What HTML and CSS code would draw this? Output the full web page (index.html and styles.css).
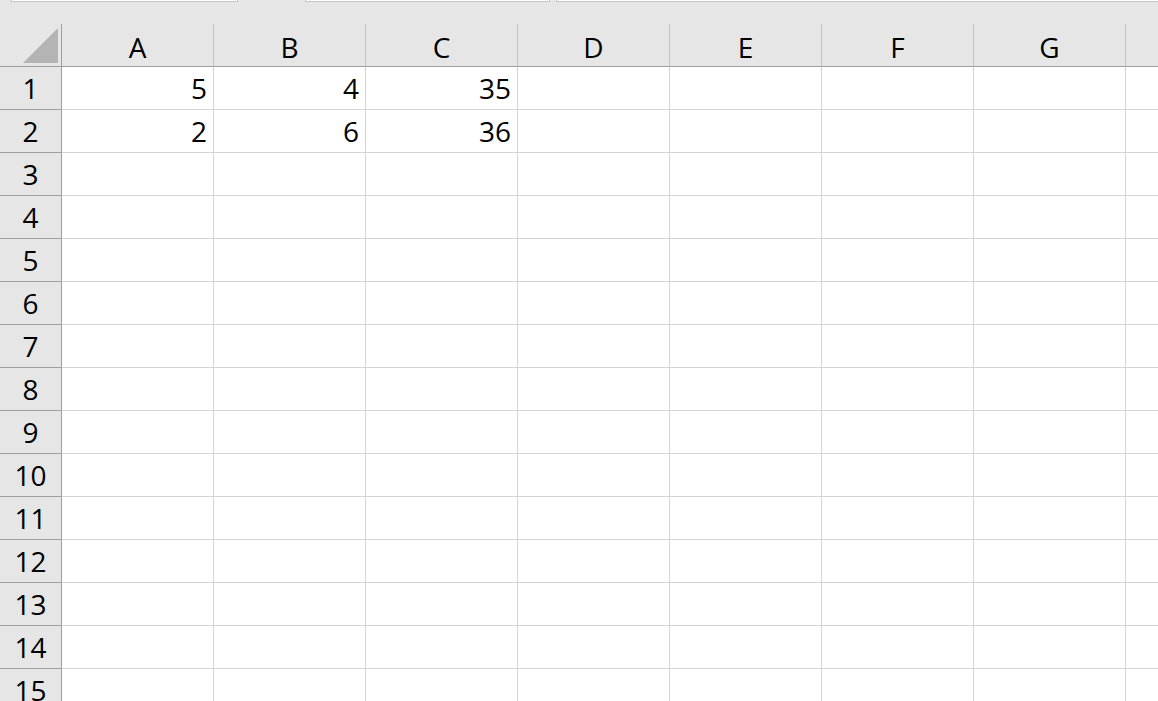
FILE: index.html
```html
<!DOCTYPE html>
<html lang="en">
<head>
    <meta charset="UTF-8">
    <meta name="viewport" content="width=device-width, initial-scale=1.0">
    <title>Sheet1 - Excel</title>
    <link rel="stylesheet" href="styles.css">
</head>
<body>
    <div class="sheet">
        <div class="toolbar-edge">
            <div class="edge-box name-box"></div>
            <div class="edge-box fx-box"></div>
            <div class="edge-box formula-box"></div>
        </div>

        <div class="grid">
            <div class="row head">
                <div class="cell corner">
                    <svg width="36" height="36" viewBox="0 0 36 36"><polygon points="0,35 35,35 35,0" fill="#b4b4b4"/></svg>
                </div>
                <div class="cell col">A</div>
                <div class="cell col">B</div>
                <div class="cell col">C</div>
                <div class="cell col">D</div>
                <div class="cell col">E</div>
                <div class="cell col">F</div>
                <div class="cell col">G</div>
                <div class="cell col"></div>
            </div>
            <div class="row">
                <div class="cell num">1</div>
                <div class="cell">5</div><div class="cell">4</div><div class="cell">35</div>
                <div class="cell"></div><div class="cell"></div><div class="cell"></div><div class="cell"></div><div class="cell"></div>
            </div>
            <div class="row">
                <div class="cell num">2</div>
                <div class="cell">2</div><div class="cell">6</div><div class="cell">36</div>
                <div class="cell"></div><div class="cell"></div><div class="cell"></div><div class="cell"></div><div class="cell"></div>
            </div>
            <div class="row">
                <div class="cell num">3</div>
                <div class="cell"></div><div class="cell"></div><div class="cell"></div><div class="cell"></div><div class="cell"></div><div class="cell"></div><div class="cell"></div><div class="cell"></div>
            </div>
            <div class="row">
                <div class="cell num">4</div>
                <div class="cell"></div><div class="cell"></div><div class="cell"></div><div class="cell"></div><div class="cell"></div><div class="cell"></div><div class="cell"></div><div class="cell"></div>
            </div>
            <div class="row">
                <div class="cell num">5</div>
                <div class="cell"></div><div class="cell"></div><div class="cell"></div><div class="cell"></div><div class="cell"></div><div class="cell"></div><div class="cell"></div><div class="cell"></div>
            </div>
            <div class="row">
                <div class="cell num">6</div>
                <div class="cell"></div><div class="cell"></div><div class="cell"></div><div class="cell"></div><div class="cell"></div><div class="cell"></div><div class="cell"></div><div class="cell"></div>
            </div>
            <div class="row">
                <div class="cell num">7</div>
                <div class="cell"></div><div class="cell"></div><div class="cell"></div><div class="cell"></div><div class="cell"></div><div class="cell"></div><div class="cell"></div><div class="cell"></div>
            </div>
            <div class="row">
                <div class="cell num">8</div>
                <div class="cell"></div><div class="cell"></div><div class="cell"></div><div class="cell"></div><div class="cell"></div><div class="cell"></div><div class="cell"></div><div class="cell"></div>
            </div>
            <div class="row">
                <div class="cell num">9</div>
                <div class="cell"></div><div class="cell"></div><div class="cell"></div><div class="cell"></div><div class="cell"></div><div class="cell"></div><div class="cell"></div><div class="cell"></div>
            </div>
            <div class="row">
                <div class="cell num">10</div>
                <div class="cell"></div><div class="cell"></div><div class="cell"></div><div class="cell"></div><div class="cell"></div><div class="cell"></div><div class="cell"></div><div class="cell"></div>
            </div>
            <div class="row">
                <div class="cell num">11</div>
                <div class="cell"></div><div class="cell"></div><div class="cell"></div><div class="cell"></div><div class="cell"></div><div class="cell"></div><div class="cell"></div><div class="cell"></div>
            </div>
            <div class="row">
                <div class="cell num">12</div>
                <div class="cell"></div><div class="cell"></div><div class="cell"></div><div class="cell"></div><div class="cell"></div><div class="cell"></div><div class="cell"></div><div class="cell"></div>
            </div>
            <div class="row">
                <div class="cell num">13</div>
                <div class="cell"></div><div class="cell"></div><div class="cell"></div><div class="cell"></div><div class="cell"></div><div class="cell"></div><div class="cell"></div><div class="cell"></div>
            </div>
            <div class="row">
                <div class="cell num">14</div>
                <div class="cell"></div><div class="cell"></div><div class="cell"></div><div class="cell"></div><div class="cell"></div><div class="cell"></div><div class="cell"></div><div class="cell"></div>
            </div>
            <div class="row">
                <div class="cell num">15</div>
                <div class="cell"></div><div class="cell"></div><div class="cell"></div><div class="cell"></div><div class="cell"></div><div class="cell"></div><div class="cell"></div><div class="cell"></div>
            </div>
        </div>
    </div>
</body>
</html>
```

FILE: styles.css
```css
body, html {
    margin: 0;
    padding: 0;
    width: 1158px;
    height: 701px;
    overflow: hidden;
    background-color: #e6e6e6;
    font-family: "Open Sans", "Noto Sans", Arial, sans-serif;
    color: #000;
}

.sheet {
    width: 1158px;
    height: 701px;
    overflow: hidden;
}

.toolbar-edge {
    display: flex;
    height: 24px;
    padding-left: 11px;
}

.edge-box {
    height: 1px;
    background-color: #fff;
    border: 1px solid #c6c6c6;
    border-top: none;
    box-sizing: content-box;
}

.name-box {
    width: 225px;
}

.fx-box {
    width: 243px;
    margin-left: 67px;
}

.formula-box {
    flex: 1;
    margin-left: 6px;
    border-right: none;
}

.grid {
    width: 1278px;
    background-color: #fff;
}

.row {
    display: grid;
    grid-template-columns: 62px repeat(8, 152px);
    height: 43px;
}

.cell {
    box-sizing: border-box;
    height: 43px;
    border-right: 1px solid #d4d4d4;
    border-bottom: 1px solid #d4d4d4;
    display: flex;
    align-items: center;
    justify-content: flex-end;
    padding-right: 6px;
    font-size: 28px;
    line-height: 1;
}

.row.head {
    background-color: #e6e6e6;
}

.row.head .cell {
    border-bottom: 1px solid #9f9f9f;
    border-right-color: #c4c4c4;
    justify-content: center;
    padding: 3px 0 0 0;
}

.row.head .corner {
    border-right-color: #9f9f9f;
    align-items: flex-start;
    justify-content: flex-start;
    padding: 4px 0 0 23px;
}

.corner svg {
    display: block;
}

.num {
    background-color: #e6e6e6;
    border-right-color: #9f9f9f;
    border-bottom-color: #9f9f9f;
    justify-content: center;
    padding-right: 0;
}
```
